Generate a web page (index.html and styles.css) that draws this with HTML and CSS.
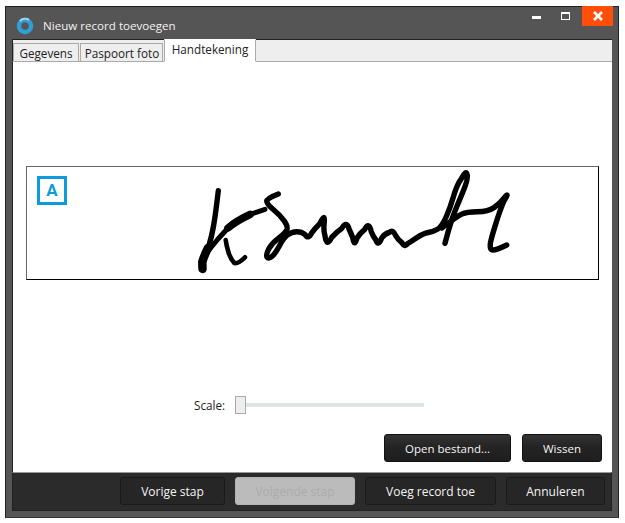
FILE: index.html
```html
<!DOCTYPE html>
<html lang="en">
<head>
    <meta charset="UTF-8">
    <title>Nieuw record toevoegen</title>
    <link rel="stylesheet" href="styles.css">
</head>
<body>
    <div class="window">
        <div class="titlebar">
            <svg class="app-icon" viewBox="0 0 18 18">
                <circle cx="9" cy="9" r="6" fill="none" stroke="#2f9fd8" stroke-width="4.5"/>
                <path d="M4 4 A7 7 0 0 1 13 3" fill="none" stroke="#a9d6ee" stroke-width="2"/>
            </svg>
            <span class="title">Nieuw record toevoegen</span>
            <div class="win-btns">
                <span class="win-min"></span>
                <span class="win-max"></span>
                <span class="win-close">
                    <svg viewBox="0 0 10 10" width="10" height="10">
                        <path d="M1 1 L9 9 M9 1 L1 9" stroke="#fff" stroke-width="2.6"/>
                    </svg>
                </span>
            </div>
        </div>
        <div class="tabs">
            <div class="tab tab-gegevens">Gegevens</div>
            <div class="tab tab-paspoort">Paspoort foto</div>
            <div class="tab active">Handtekening</div>
        </div>
        <div class="content">
            <div class="sig-box">
                <div class="badge">A</div>
                <svg class="signature" viewBox="26 166 572 113">
                    <g fill="none" stroke="#000" stroke-width="5.4" stroke-linecap="round" stroke-linejoin="round">
                        <!-- K -->
                        <path d="M218.3 190.7 Q215.7 213.3 213.7 225 Q211.7 236.7 209 245 Q206.7 253.3 204.5 257.5"/>
                        <path d="M208 248 Q204 256 202.3 262 L202.5 269" stroke-width="8.5"/>
                        <path d="M265 209.3 L248.3 215 Q233.3 223.3 228 228 Q223.3 233.3 218 239 L209 250" stroke-width="5"/>
                        <path d="M250 214.5 Q236 221 228 228" stroke-width="7.5"/>
                        <path d="M225.7 240 Q226.5 246 228.3 251.7 Q230 258 234.3 263 Q238 264 245 257.3" stroke-width="4.6"/>
                        <!-- rest of the name in one stroke -->
                        <path d="M278.3 194 Q266.7 198.3 266.7 201 Q266.7 204 273.3 209.5 Q280 215 284.2 220.8 Q288.3 226.7 286.7 230 Q285 233.3 278.3 238.3 Q271.7 243.3 268.7 249 Q265.7 255 267 257.2 Q268.3 259.3 271.7 256.7 Q275 254 279.2 246.2 Q283.3 238.3 287.5 235 Q291.7 231.7 296.7 231.7 Q301.7 231.7 305 234.5 Q308.3 240 311.7 232.8 Q315 228.3 320 223.3 Q325 212 324.2 223 Q323.3 230 325 235.8 Q326.7 248 331.7 237.4 Q336.7 231.7 341.7 228.4 Q346.7 220 349 229 Q351 233.3 352.7 237.5 Q354.3 248 357 238 Q360 233.3 364.5 229.7 Q369 221 371.2 231.4 Q373.3 236.7 375.8 239.8 Q378.3 247 381.7 238 Q385 233.3 389.2 232.5 Q393.3 229 395.8 235.9 Q398.3 240 401.7 242.5 Q405 248 407.5 243.7 Q410 242.3 416.7 237.8 Q423.3 233.3 428.3 232.5 Q433.3 231.7 437.5 229.2 Q441.7 226.7 445.9 217.5 Q450 208.3 453.4 196.7 Q456.7 185 461.4 178.6 Q466 170 467 174 Q468.3 178 465 186.5 Q461.7 195 456.7 206.7 Q451.7 218.3 448.4 230.8 L445 243.3"/>
                        <path d="M441.7 228 Q456.7 216.7 461.7 214.2 Q466.7 211.7 477.5 211.7 Q488.3 211.7 494.2 207.5 Q500 203.3 504.2 198 Q510 191 504.2 200.5 Q500 210 495.9 223.4 Q491.7 236.7 490.5 242.5 Q489.3 250 493 250 Q496.7 250 506.7 245"/>
                    </g>
                </svg>
            </div>
            <div class="scale-row">
                <span class="scale-label">Scale:</span>
                <div class="thumb"></div>
                <div class="track"></div>
            </div>
            <div class="content-btns">
                <button class="btn btn-open">Open bestand...</button>
                <button class="btn btn-wissen">Wissen</button>
            </div>
        </div>
        <div class="footer">
            <button class="btn f-vorige">Vorige stap</button>
            <button class="btn f-volgende" disabled>Volgende stap</button>
            <button class="btn f-voeg">Voeg record toe</button>
            <button class="btn f-annuleren">Annuleren</button>
        </div>
    </div>
</body>
</html>
```

FILE: styles.css
```css
html, body {
    margin: 0;
    padding: 0;
    background: #fff;
}
body {
    width: 625px;
    height: 523px;
    overflow: hidden;
    font-family: "Open Sans", sans-serif;
    font-size: 11.7px;
}
.window {
    box-sizing: border-box;
    width: 614px;
    height: 512px;
    margin: 6px 0 0 5px;
    padding: 0 6px 6px 6px;
    background: #555;
    border: 1px solid #222;
    border-bottom-color: #333;
    display: flex;
    flex-direction: column;
}
.titlebar {
    height: 32px;
    flex: none;
    display: flex;
    align-items: flex-start;
    color: #f2f2f2;
}
.app-icon {
    width: 18px;
    height: 18px;
    margin: 10px 0 0 4px;
}
.title {
    margin: 10px 0 0 9px;
    font-size: 11.6px;
    line-height: 18px;
}
.win-btns {
    margin: -1px -1px 0 auto;
    display: flex;
    align-items: flex-start;
}
.win-min {
    width: 9px;
    height: 3px;
    margin: 10px 20px 0 0;
    background: #fff;
}
.win-max {
    box-sizing: border-box;
    width: 9px;
    height: 8px;
    margin: 6px 12px 0 0;
    border: 1px solid #fff;
    border-top-width: 2px;
}
.win-close {
    width: 31px;
    height: 20px;
    background: #ff4e0a;
    display: flex;
    align-items: center;
    justify-content: center;
}
.tabs {
    height: 23px;
    flex: none;
    display: flex;
    align-items: flex-end;
    box-sizing: border-box;
    background: #eee;
    border-top: 1px solid #222;
    border-left: 1px solid #222;
    border-bottom: 1px solid #aaa;
}
.tab {
    box-sizing: border-box;
    height: 19px;
    margin-bottom: -1px;
    margin-right: 1px;
    line-height: 18px;
    text-align: center;
    color: #222;
    background: #eee;
    border: 1px solid #aaa;
}
.tab-gegevens { width: 66px; }
.tab-paspoort { width: 83px; padding-left: 1px; }
.tab.active {
    width: 92px;
    height: 23px;
    margin-right: 0;
    line-height: 19px;
    background: #fff;
    border-bottom-color: #fff;
    border-top-color: #fff;
}
.content {
    flex: 1;
    background: #fff;
    border-left: 1px solid #222;
    display: flex;
    flex-direction: column;
}
.sig-box {
    box-sizing: border-box;
    width: 573px;
    height: 114px;
    margin: 104px 0 0 13px;
    border: 1px solid #000;
    border-top-color: #666;
    border-left-color: #666;
    position: relative;
}
.signature {
    display: block;
    width: 572px;
    height: 113px;
    margin: -1px 0 0 -1px;
}
.badge {
    position: absolute;
    left: 10px;
    top: 9px;
    box-sizing: border-box;
    width: 30px;
    height: 29px;
    border: 3px solid #0f9ad9;
    color: #0f9ad9;
    font-family: "Roboto", sans-serif;
    font-size: 17px;
    font-weight: 700;
    line-height: 23px;
    text-align: center;
}
.scale-row {
    margin: 116px 0 0 181px;
    height: 18px;
    display: flex;
    align-items: center;
}
.scale-label {
    width: 41px;
    color: #222;
}
.thumb {
    box-sizing: border-box;
    width: 11px;
    height: 18px;
    background: #eee;
    border: 1px solid #aaa;
}
.track {
    width: 178px;
    height: 4px;
    background: #e0e4e4;
}
.content-btns {
    margin: 20px 0 0 371px;
    display: flex;
    gap: 11px;
}
.btn {
    box-sizing: border-box;
    height: 28px;
    padding: 0;
    font-family: "Open Sans", sans-serif;
    font-size: 12px;
    color: #f4f4f4;
    background: linear-gradient(#333, #242424 45%, #1e1e1e);
    border: 1px solid #111;
    border-radius: 3px;
}
.btn-open { width: 127px; font-size: 11.5px; }
.btn-wissen { width: 80px; font-size: 11.5px; }
.footer {
    flex: none;
    height: 39px;
    box-sizing: border-box;
    padding: 4px 0 0 107px;
    display: flex;
    gap: 10px;
    background: #2b2b2b;
    border: 1px solid #222;
    border-top: 1px solid #999;
}
.footer .btn {
    background: #262626;
    border-color: #1a1a1a;
}
.f-vorige { width: 105px; }
.footer .f-volgende {
    width: 120px;
    color: #acacac;
    background: #bbb;
    border-color: #b4b4b4;
}
.f-voeg { width: 131px; }
.f-annuleren { width: 99px; }
```
